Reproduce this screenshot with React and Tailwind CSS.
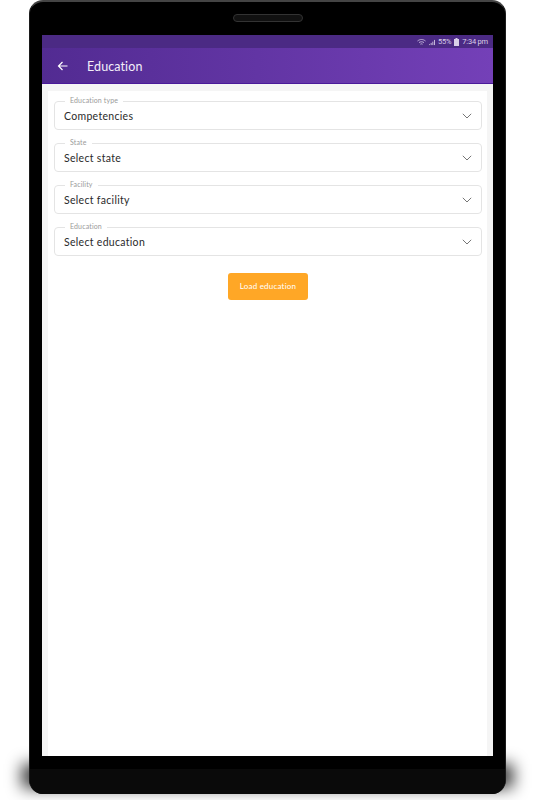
import React from 'react';

const fields = [
  { label: 'Education type', value: 'Competencies' },
  { label: 'State', value: 'Select state' },
  { label: 'Facility', value: 'Select facility' },
  { label: 'Education', value: 'Select education' },
];

function Field({ label, value }) {
  return (
    <div className="relative h-[29px] rounded-[4px] border border-[#e4e4e4] bg-white px-[9px] flex items-center justify-between">
      <span className="absolute left-[10px] top-[-7px] bg-white px-[5px] text-[7px] leading-[10px] tracking-[0.15px] text-[#9a9a9a]">{label}</span>
      <span className="pt-[3px] text-[10.5px] tracking-[0.3px] text-[#2a2a2a]">{value}</span>
      <svg width="10" height="6" viewBox="0 0 10 6" fill="none" stroke="#666" strokeWidth="0.9" className="mt-[1px]">
        <path d="M0.8 0.8 L5 5 L9.2 0.8" />
      </svg>
    </div>
  );
}

function StatusIcons() {
  return (
    <div className="flex items-center gap-[3px] pt-[1px] font-['Roboto',sans-serif]">
      {/* wifi */}
      <svg width="9" height="7" viewBox="0 0 9 7" fill="none" stroke="#d9cfe8" strokeWidth="0.8">
        <path d="M0.5 2 C3 0 6 0 8.5 2" />
        <path d="M2 3.6 C3.5 2.5 5.5 2.5 7 3.6" />
        <path d="M3.4 5.2 C4.1 4.7 4.9 4.7 5.6 5.2" />
      </svg>
      {/* signal */}
      <svg width="6" height="7" viewBox="0 0 7 7" fill="#d9cfe8">
        <rect x="0" y="5.5" width="1" height="1" />
        <rect x="2" y="4" width="1" height="2.5" />
        <rect x="4" y="2.5" width="1" height="4" />
        <rect x="6" y="0.5" width="1" height="6" />
      </svg>
      <span className="tracking-[-0.2px]">55%</span>
      {/* battery */}
      <svg width="5" height="8" viewBox="0 0 5 8" fill="#d9cfe8">
        <path d="M1.5 0 H3.5 V1 H5 V8 H0 V1 H1.5 Z" />
      </svg>
      <span className="tracking-[-0.2px]">7:34 pm</span>
    </div>
  );
}

export default function App() {
  return (
    <div className="relative w-[535px] h-[800px] overflow-hidden bg-white font-['Lato','Noto_Sans',sans-serif]">
      {/* shadow under the tablet */}
      <div className="absolute left-[22px] right-[22px] top-[764px] h-[24px] bg-black/80 blur-[8px]"></div>

      <div className="relative ml-[29px] w-[477px] h-[794px] rounded-[14px] bg-black border-t-2 border-x border-t-[#444] border-x-[#1c1c1c] border-b-0 overflow-hidden flex flex-col items-center">
        <div className="mt-[12px] w-[70px] h-[8px] rounded-full bg-[#111] border border-[#333]"></div>

        <div className="mt-[13px] w-[451px] h-[721px] flex flex-col bg-[#f5f5f5]">
          <div className="h-[13px] bg-[#4b2a84] flex items-center justify-end pr-[5px] text-[7.5px] leading-none text-[#d9cfe8]">
            <StatusIcons />
          </div>
          <div className="h-[36px] bg-gradient-to-r from-[#522b92] to-[#7440b8] border-b border-[#4a1a9a] flex items-center pl-[15px] text-white">
            <svg width="12" height="12" viewBox="0 0 12 12" fill="none" stroke="#fff" strokeWidth="1.2">
              <path d="M10.5 6 H1.5 M5.5 2 L1.5 6 L5.5 10" />
            </svg>
            <span className="ml-[18px] pt-[3px] text-[12.5px] tracking-[0.1px] text-[#f3eef9]">Education</span>
          </div>

          <div className="flex-1 min-h-0 ml-[6px] mr-[6px] mt-[7px] bg-white pl-[6px] pr-[5px] pt-[10px]">
            <div className="flex flex-col gap-[13px]">
              {fields.map((f) => (
                <Field key={f.label} label={f.label} value={f.value} />
              ))}
            </div>
            <div className="flex justify-center mt-[17px]">
              <button className="w-[80px] h-[27px] pb-[2px] rounded-[3px] bg-[#ffa726] text-white text-[8px] tracking-[0.2px]">Load education</button>
            </div>
          </div>
        </div>

        <div className="mt-[13px] flex-1 w-full bg-[#0a0a0a]"></div>
      </div>
    </div>
  );
}
